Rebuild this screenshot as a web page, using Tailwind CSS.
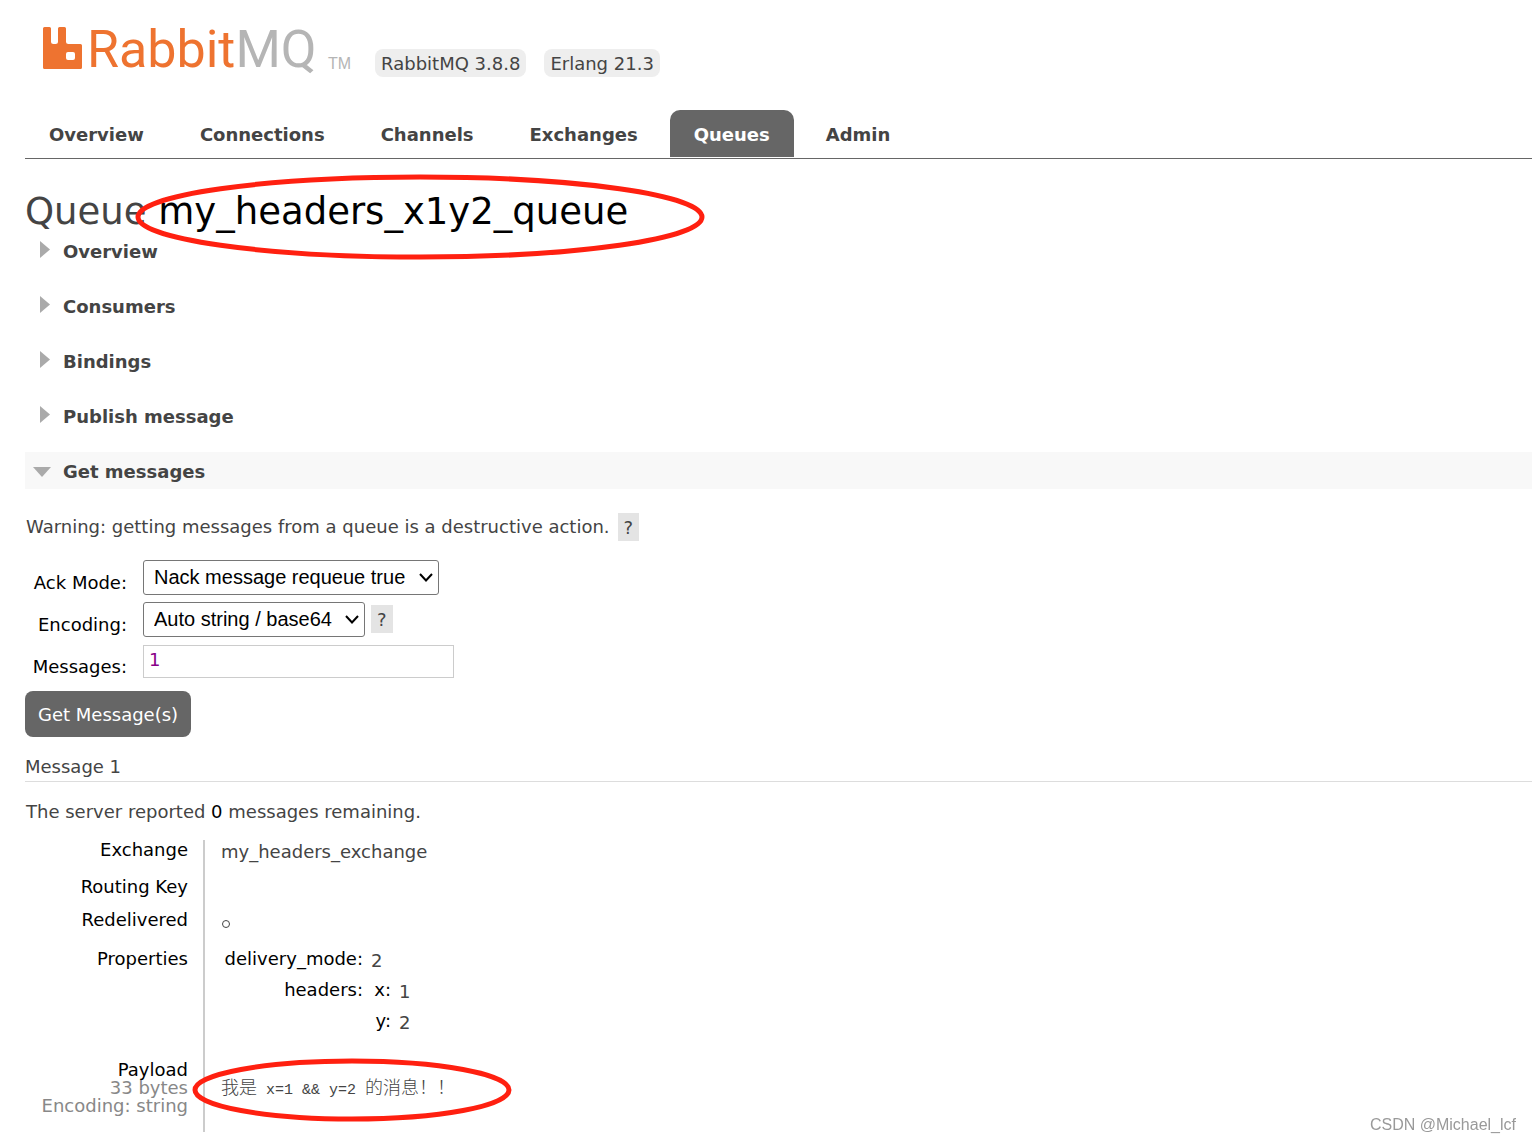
<!DOCTYPE html>
<html lang="en">
<head>
  <meta charset="UTF-8" />
  <meta name="viewport" content="width=device-width, initial-scale=1.0" />
  <title>RabbitMQ Management</title>
  <script src="https://cdn.jsdelivr.net/npm/@tailwindcss/browser@4"></script>
</head>
<body class="bg-white pl-[25px] font-['Verdana','DejaVu_Sans',sans-serif] text-[18px] leading-[18px] text-[#444]">
  <!-- Header -->
  <header class="flex items-start h-[110px] pt-[26px] pl-[18px]">
    <a href="#" class="flex items-start" aria-label="RabbitMQ">
      <svg class="w-10 h-11" viewBox="0 0 40 44" fill="#ee7330">
        <path fill-rule="evenodd" d="M1.5 1H6.500Q8 1 8 2.500V15.500Q8 18 10.500 18H12.500Q15 18 15 15.500V2.500Q15 1 16.500 1H21.500Q23 1 23 2.500V15.500Q23 18 25.500 18H37.500Q39 18 39 19.500V41.500Q39 43 37.500 43H1.500Q0 43 0 41.500V2.500Q0 1 1.500 1ZM25 26Q23 26 23 28V32Q23 34 25 34H30Q32 34 32 32V28Q32 26 30 26Z" />
      </svg>
      <span class="w-[245px] pl-1 font-['Roboto',sans-serif] text-[52px] leading-[48px] text-[#ee7330]">Rabbit<span class="text-[#b5b5b5]">MQ</span></span>
      <span class="pt-[29px] font-['Liberation_Sans',sans-serif] text-[16px] text-[#b5b5b5]">TM</span>
    </a>
    <ul class="flex gap-[18px] pt-[23px] pl-6">
      <li class="rounded-lg bg-[#eee] px-1.5 pt-1.5 pb-1">RabbitMQ 3.8.8</li>
      <li class="rounded-lg bg-[#eee] px-1.5 pt-1.5 pb-1">Erlang 21.3</li>
    </ul>
  </header>

  <!-- Tabs -->
  <nav class="flex gap-2 border-b border-[#666] pb-px font-bold">
    <a href="#" class="rounded-t-[10px] px-6 pt-4 pb-[13px]">Overview</a>
    <a href="#" class="rounded-t-[10px] px-6 pt-4 pb-[13px]">Connections</a>
    <a href="#" class="rounded-t-[10px] px-6 pt-4 pb-[13px]">Channels</a>
    <a href="#" class="rounded-t-[10px] px-6 pt-4 pb-[13px]">Exchanges</a>
    <a href="#" class="rounded-t-[10px] bg-[#666] px-6 pt-4 pb-[13px] text-white">Queues</a>
    <a href="#" class="rounded-t-[10px] px-6 pt-4 pb-[13px]">Admin</a>
  </nav>

  <main>
    <h1 class="relative pt-[33px] text-[37px] leading-[40px]">
      Queue <b class="font-normal text-black">my_headers_x1y2_queue</b>
      <svg class="absolute top-[15px] left-[110px] w-[571px] h-[87px]" viewBox="0 0 571 87" fill="none" stroke="#ff2010" stroke-width="5">
        <ellipse cx="285" cy="43" rx="282" ry="40" />
      </svg>
    </h1>

    <!-- Sections -->
    <h2 class="mb-[18px] flex h-[37px] items-center pt-0.5 font-bold">
      <svg class="mr-3 ml-[15px] w-[11px] h-[22px]" viewBox="0 0 11 22" fill="#aaa"><path d="M0 0L10 8.500L0 17Z" /></svg>
      Overview
    </h2>
    <h2 class="mb-[18px] flex h-[37px] items-center pt-0.5 font-bold">
      <svg class="mr-3 ml-[15px] w-[11px] h-[22px]" viewBox="0 0 11 22" fill="#aaa"><path d="M0 0L10 8.500L0 17Z" /></svg>
      Consumers
    </h2>
    <h2 class="mb-[18px] flex h-[37px] items-center pt-0.5 font-bold">
      <svg class="mr-3 ml-[15px] w-[11px] h-[22px]" viewBox="0 0 11 22" fill="#aaa"><path d="M0 0L10 8.500L0 17Z" /></svg>
      Bindings
    </h2>
    <h2 class="mb-[18px] flex h-[37px] items-center pt-0.5 font-bold">
      <svg class="mr-3 ml-[15px] w-[11px] h-[22px]" viewBox="0 0 11 22" fill="#aaa"><path d="M0 0L10 8.500L0 17Z" /></svg>
      Publish message
    </h2>
    <h2 class="flex h-[37px] items-center bg-[#f8f8f8] pt-0.5 font-bold">
      <svg class="mr-3 ml-2 w-[18px] h-2.5" viewBox="0 0 18 10" fill="#aaa"><path d="M0 0H18L9 10Z" /></svg>
      Get messages
    </h2>

    <!-- Get messages form -->
    <form>
      <p class="flex items-center gap-2 pt-6 pl-px">
        Warning: getting messages from a queue is a destructive action.
        <button type="button" class="bg-[#e4e4e4] px-[6px] pt-1.5 pb-1">?</button>
      </p>
      <table class="mt-[15px] text-black">
        <tr class="h-[42px]">
          <th class="w-[118px] pt-[11px] pr-4 text-right font-normal"><label for="ackmode">Ack Mode:</label></th>
          <td>
            <div class="flex">
              <div class="relative">
                <select id="ackmode" class="h-[35px] w-[296px] appearance-none rounded-[3px] border border-[#767676] bg-white pl-2.5 font-['Liberation_Sans',sans-serif] text-[20px] leading-[24px]">
                  <option>Nack message requeue true</option>
                  <option>Ack message requeue false</option>
                </select>
                <svg class="pointer-events-none absolute top-[13px] right-1.5 w-3.5 h-2.5" viewBox="0 0 14 10" fill="none" stroke="#000" stroke-width="2"><path d="M1 1L7 7.500L13 1" /></svg>
              </div>
            </div>
          </td>
        </tr>
        <tr class="h-[42px]">
          <th class="w-[118px] pt-[11px] pr-4 text-right font-normal"><label for="encoding">Encoding:</label></th>
          <td>
            <div class="flex items-center gap-1.5">
              <div class="relative">
                <select id="encoding" class="h-[35px] w-[222px] appearance-none rounded-[3px] border border-[#767676] bg-white pl-2.5 font-['Liberation_Sans',sans-serif] text-[20px] leading-[24px]">
                  <option>Auto string / base64</option>
                  <option>base64</option>
                </select>
                <svg class="pointer-events-none absolute top-[13px] right-1.5 w-3.5 h-2.5" viewBox="0 0 14 10" fill="none" stroke="#000" stroke-width="2"><path d="M1 1L7 7.500L13 1" /></svg>
              </div>
              <button type="button" class="bg-[#e4e4e4] px-[6px] pt-1.5 pb-1 text-[#444]">?</button>
            </div>
          </td>
        </tr>
        <tr class="h-[42px]">
          <th class="w-[118px] pt-[11px] pr-4 text-right font-normal"><label for="count">Messages:</label></th>
          <td><input id="count" type="text" value="1" class="block h-[33px] w-[311px] border border-[#ccc] px-[5px] pb-[3px] text-[#808]" /></td>
        </tr>
      </table>
      <button type="button" class="mt-[9px] h-[46px] rounded-lg bg-[#666] px-[13px] pt-0.5 text-white">Get Message(s)</button>
    </form>

    <h3 class="border-b border-[#ddd] pt-[21px] pb-[5px]">Message 1</h3>
    <p class="pt-[21px] pl-px">The server reported <b class="font-normal text-black">0</b> messages remaining.</p>

    <!-- Message -->
    <table class="mt-[19px]">
      <tr class="h-[37px] align-top">
        <th class="w-[179px] border-r-2 border-[#ccc] pt-px pr-[15px] text-right font-normal text-black">Exchange</th>
        <td class="pt-[3px] pl-4">my_headers_exchange</td>
      </tr>
      <tr class="h-[33px] align-top">
        <th class="border-r-2 border-[#ccc] pt-px pr-[15px] text-right font-normal text-black">Routing Key</th>
        <td class="pt-[3px] pl-4"></td>
      </tr>
      <tr class="h-[39px] align-top">
        <th class="border-r-2 border-[#ccc] pt-px pr-[15px] text-right font-normal text-black">Redelivered</th>
        <td class="pt-[5px] pl-4"><svg class="w-2.5 h-[18px]" viewBox="0 0 10 18" fill="none" stroke="#444"><circle cx="5" cy="9" r="3.500" /></svg></td>
      </tr>
      <tr class="h-[111px] align-top">
        <th class="border-r-2 border-[#ccc] pt-px pr-[15px] text-right font-normal text-black">Properties</th>
        <td class="pl-4">
          <table>
            <tr class="h-[31px] align-top">
              <th class="w-[142px] pt-px text-right font-normal text-black">delivery_mode:</th>
              <td class="pt-[3px] pl-2">2</td>
            </tr>
            <tr class="align-top">
              <th class="pt-px text-right font-normal text-black">headers:</th>
              <td class="pl-2">
                <table>
                  <tr class="h-[31px] align-top">
                    <th class="w-5 pt-px text-right font-normal text-black">x:</th>
                    <td class="pt-[3px] pl-2">1</td>
                  </tr>
                  <tr class="h-[31px] align-top">
                    <th class="w-5 pt-px text-right font-normal text-black">y:</th>
                    <td class="pt-[3px] pl-2">2</td>
                  </tr>
                </table>
              </td>
            </tr>
          </table>
        </td>
      </tr>
      <tr class="h-[72px] align-top">
        <th class="border-r-2 border-[#ccc] pt-px pr-[15px] text-right font-normal text-black">
          Payload
          <span class="block text-[#888]">33 bytes</span>
          <span class="block text-[#888]">Encoding: string</span>
        </th>
        <td class="relative pt-[17px] pl-4">
          <pre class="font-['Noto_Sans_CJK_SC',sans-serif] font-light">我是<span class="font-['Liberation_Mono',monospace] text-[15px]"> x=1 &amp;&amp; y=2 </span>的消息！！</pre>
          <svg class="absolute -top-[2px] -left-[14px] w-[322px] h-[65px]" viewBox="0 0 322 65" fill="none" stroke="#ff2010" stroke-width="5">
            <ellipse cx="161" cy="32" rx="157" ry="29" />
          </svg>
        </td>
      </tr>
    </table>
  </main>

  <footer class="fixed right-4 bottom-[9px] font-['Liberation_Sans',sans-serif] text-[16px] text-[#999]">CSDN @Michael_lcf</footer>
</body>
</html>
